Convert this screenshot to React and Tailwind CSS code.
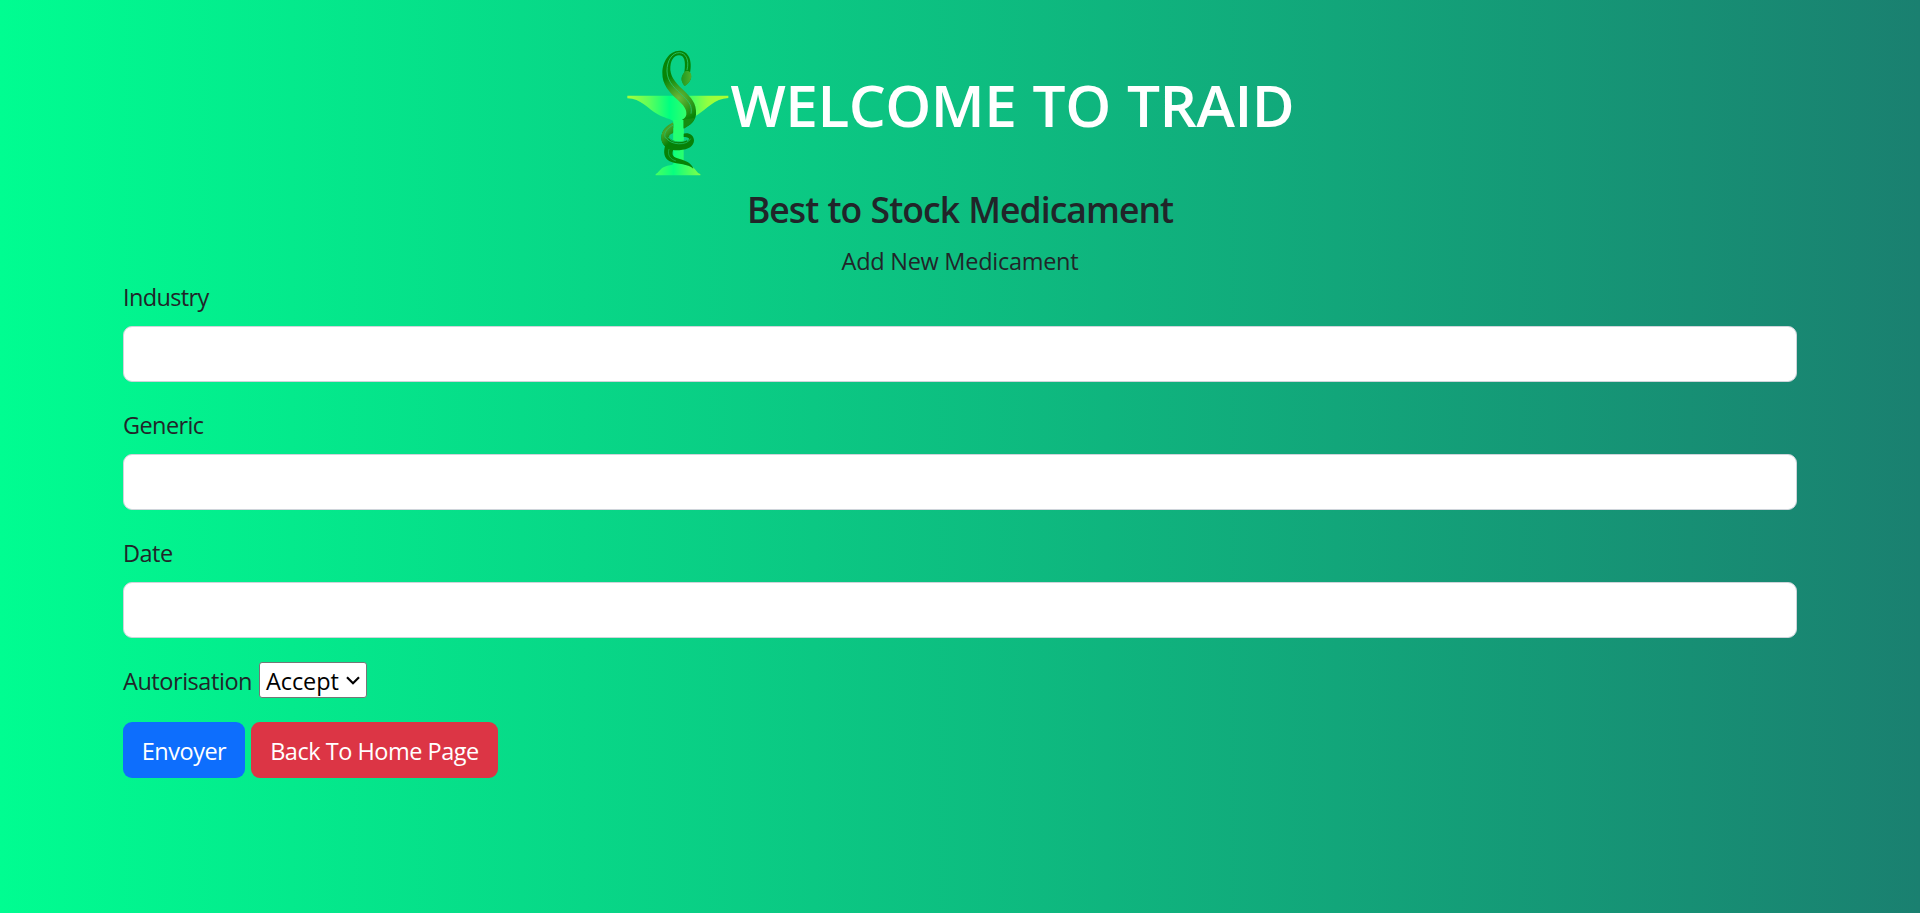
import React from "react";

const fields = [
  { name: "Industry", tracking: "tracking-[-0.65px]" },
  { name: "Generic", tracking: "tracking-[-0.6px]" },
  { name: "Date", tracking: "tracking-[-0.5px]" },
];

function Logo() {
  return (
    <svg className="h-[126px] w-[102px] shrink-0" viewBox="50 28 306 378">
      <defs>
        <linearGradient id="cup" x1="50" x2="354" y1="0" y2="0" gradientUnits="userSpaceOnUse">
          <stop offset="0" stopColor="#a8ff38" />
          <stop offset=".22" stopColor="#5cff5c" />
          <stop offset=".42" stopColor="#00ff80" />
          <stop offset=".6" stopColor="#38ff68" />
          <stop offset=".8" stopColor="#94ff40" />
          <stop offset="1" stopColor="#adff2f" />
        </linearGradient>
        <linearGradient id="base" x1="136" x2="270" y1="0" y2="0" gradientUnits="userSpaceOnUse">
          <stop offset="0" stopColor="#48ff60" />
          <stop offset=".4" stopColor="#08ff80" />
          <stop offset="1" stopColor="#80ff48" />
        </linearGradient>
        <radialGradient id="snake" cx="205" cy="172" r="70" gradientUnits="userSpaceOnUse">
          <stop offset="0" stopColor="#6cb83a" />
          <stop offset="1" stopColor="#078407" />
        </radialGradient>
        <linearGradient id="head" x1="214" x2="244" y1="0" y2="0" gradientUnits="userSpaceOnUse">
          <stop offset="0" stopColor="#229a20" />
          <stop offset="1" stopColor="#50b02c" />
        </linearGradient>
        <linearGradient id="coil" x1="160" x2="230" y1="240" y2="310" gradientUnits="userSpaceOnUse">
          <stop offset="0" stopColor="#128a10" />
          <stop offset=".25" stopColor="#4aa52c" />
          <stop offset=".6" stopColor="#088008" />
        </linearGradient>
      </defs>
      <path d="M51 165H354V172C312 174 290 205 262 222C244 234 228 235 220 242V376H189V242C180 234 160 232 142 221C112 204 92 174 51 173Z" fill="url(#cup)" />
      <path d="M189 370H219C228 376 246 374 254 386C260 394 264 399 270 400V404H136V400C145 397 148 384 163 378C174 373 184 375 189 370Z" fill="url(#base)" />
      <path d="M187 250C168 258 153 270 153 292C153 305 160 315 171 318L179 302C169 292 174 282 184 277L189 275V262L219 262C240 254 254 242 257 222C260 186 240 170 222 151C201 131 183 115 180 88C179 61 190 44 206 44C222 44 227 61 222 96C207 114 216 126 224 136C243 123 246 106 239 97C247 58 234 30 207 30C176 31 157 62 156 96C155 132 178 155 200 176C220 194 230 206 228 222C225 238 204 241 187 250Z" fill="url(#snake)" />
      <path d="M222 94C207 112 215 126 222 136C243 123 247 106 240 96C235 90 228 88 222 94Z" fill="url(#head)" />
      <path d="M230 88C238 56 225 36 207 36C184 36 170 61 170 91C170 126 198 146 219 167C237 184 246 197 242 219" fill="none" stroke="#27c46c" strokeWidth="2.6" />
      <path d="M189 245C165 256 153 270 153 292C154 321 180 330 207 329C235 327 251 316 251 299C250 280 229 273 216 281V289C230 288 238 291 235 298C229 306 196 307 184 299C172 291 174 282 189 277Z" fill="url(#coil)" />
      <path d="M189 238H220V300C211 305 198 304 189 300Z" fill="#24ff70" />
      <path d="M220 236L253 232C248 247 235 256 220 264Z" fill="#168c12" />
      <path d="M189 253C168 263 158 282 166 293" fill="none" stroke="#20c66d" strokeWidth="2.2" />
      <path d="M178 293C190 306 218 306 230 297L232 310C215 320 190 316 174 304Z" fill="#078207" />
      <path d="M167 291C180 314 230 316 241 294M174 289C180 299 188 303 204 303C218 303 230 300 236 292" fill="none" stroke="#20c66d" strokeWidth="2.2" />
      <path d="M165 314C158 334 161 353 178 362C205 373 232 368 249 384C244 366 220 358 201 353C184 348 184 337 191 323Z" fill="#078207" />
      <path d="M176 325C170 343 180 356 197 361" fill="none" stroke="#18b65b" strokeWidth="2" />
    </svg>
  );
}

export default function App() {
  return (
    <main className="flex h-screen flex-col overflow-hidden bg-[linear-gradient(to_right,#00fd91,#1a8070)] px-[123px] pt-[50px] font-['Open_Sans',sans-serif] text-[23.5px] leading-[36px] text-[#212529]">
      <header className="flex flex-col items-center">
        <div className="flex h-[125px] items-start gap-[2px] pl-px">
          <Logo />
          <h1 className="mt-[18px] w-[564px] whitespace-nowrap text-[58.5px] leading-[72px] font-semibold tracking-[-0.5px] [word-spacing:1.5px] text-white">WELCOME TO TRAID</h1>
        </div>
        <h2 className="mt-[13px] text-[35.5px] leading-[43px] font-semibold tracking-[-0.95px] [word-spacing:1px]">Best to Stock Medicament</h2>
        <p className="mt-[12px] h-[35px] tracking-[-0.27px]">Add New Medicament</p>
      </header>
      <form className="flex flex-col" onSubmit={(e) => e.preventDefault()}>
        {fields.map(({ name, tracking }) => (
          <label key={name} className="mb-6 flex flex-col gap-3">
            <span className={`h-9 leading-[38px] ${tracking}`}>{name}</span>
            <input className="h-14 rounded-[9px] border border-[#ced4da] bg-white px-[18px] outline-none" />
          </label>
        ))}
        <div className="flex items-center gap-[7px]">
          <span className="h-9 w-[129px] whitespace-nowrap leading-[38px] tracking-[-0.45px]">Autorisation</span>
          <button type="button" className="flex h-9 w-[108px] items-center justify-between rounded-[3px] border border-[#767676] bg-white px-[6px] text-black">
            <span className="pt-[2px] tracking-[-0.1px]">Accept</span>
            <svg className="h-[9px] w-[14px]" viewBox="0 0 14 9" fill="none" stroke="black" strokeWidth="2.2">
              <path d="M1 1.3L7 7.3L13 1.3" />
            </svg>
          </button>
        </div>
        <div className="mt-6 flex gap-[6px] text-white">
          <button className="h-14 w-[122px] rounded-[9px] bg-[#0d6efd] pt-[2px] tracking-[-0.5px]">Envoyer</button>
          <button type="button" className="h-14 w-[247px] rounded-[9px] bg-[#dc3545] pt-[2px] tracking-[-0.48px]">Back To Home Page</button>
        </div>
      </form>
    </main>
  );
}
